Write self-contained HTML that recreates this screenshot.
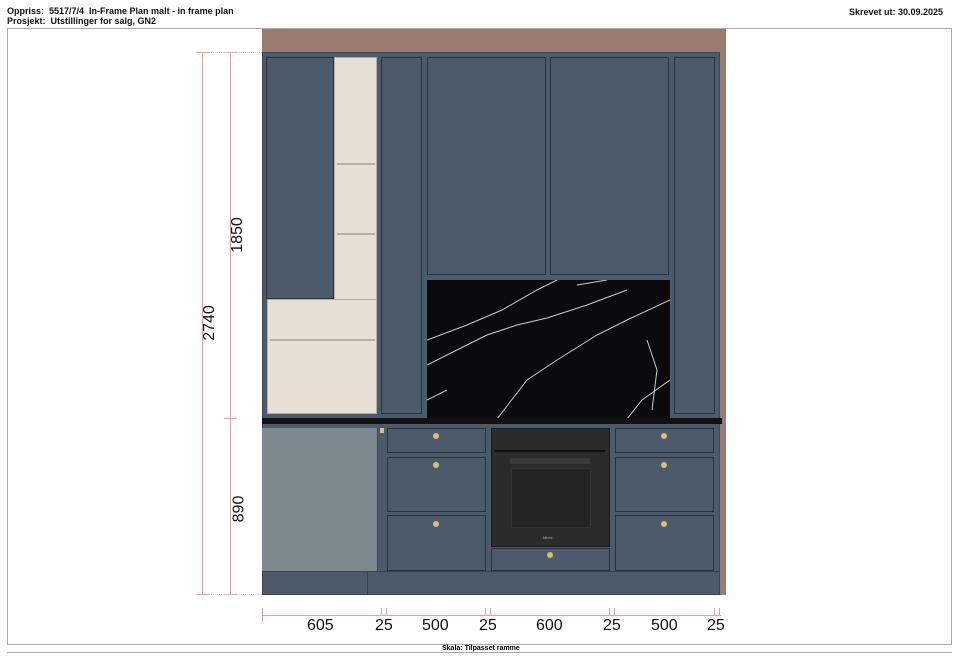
<!DOCTYPE html>
<html><head><meta charset="utf-8"><style>
*{margin:0;padding:0;box-sizing:border-box}
body{width:960px;height:659px;background:#fff;position:relative;overflow:hidden;font-family:"Liberation Sans",Arial,sans-serif}
.a{position:absolute}
.hd{font-size:9px;font-weight:bold;color:#111}
.door{position:absolute;background:#4b5b6b;border:1.5px solid #26323e}
.knob{position:absolute;width:6px;height:6px;border-radius:50%;background:#d8c070}
.wood{background:#e6dfd6}
.r{background:#f39a9a}
.dim{font-size:16px;color:#111;position:absolute}
</style></head><body>
<div class="a hd" style="left:7px;top:6px">Oppriss:&nbsp; 5517/7/4&nbsp; In-Frame Plan malt - in frame plan</div>
<div class="a hd" style="left:7px;top:16px">Prosjekt:&nbsp; Utstillinger for salg, GN2</div>
<div class="a hd" style="left:849px;top:7px">Skrevet ut: 30.09.2025</div>
<div class="a" style="left:7px;top:28px;width:945px;height:617px;border:1px solid #aaa"></div>
<div class="a" style="left:7px;top:652px;width:945px;height:1px;background:#aaa"></div>
<div class="a" style="left:442px;top:645px;font-size:7px;font-weight:bold">Skala: Tilpasset ramme</div>

<div class="a" style="left:262px;top:29px;width:464px;height:566px;background:#9a7b6f"></div>
<div class="a" style="left:262px;top:52px;width:458px;height:543px;background:#4b5b6b;border:1px solid #3a4756"></div>

<div class="a wood" style="left:334px;top:57px;width:43px;height:357px;border:1.5px solid #b8ada0"></div>
<div class="a wood" style="left:267px;top:299px;width:110px;height:115px;border:1.5px solid #b8ada0"></div>
<div class="a" style="left:337px;top:163px;width:38px;height:2px;background:#b8ada0"></div>
<div class="a" style="left:337px;top:233px;width:38px;height:2px;background:#b8ada0"></div>
<div class="a" style="left:270px;top:339px;width:105px;height:2px;background:#b8ada0"></div>
<div class="door" style="left:266px;top:57px;width:68px;height:242px"></div>

<div class="door" style="left:381px;top:57px;width:41px;height:357px"></div>
<div class="door" style="left:427px;top:57px;width:119px;height:218px"></div>
<div class="door" style="left:550px;top:57px;width:119px;height:218px"></div>
<div class="door" style="left:674px;top:57px;width:41px;height:357px"></div>

<svg class="a" style="left:427px;top:280px" width="243" height="139">
<rect width="243" height="139" fill="#0b0b0d"/>
<g stroke="#ccc" fill="none" stroke-width="1">
<path d="M0 60 L40 45 L75 30 L110 10 L130 0"/>
<path d="M0 85 L30 70 L60 55 L90 45 L120 38 L160 25 L200 10"/>
<path d="M70 139 L100 100 L130 80 L170 55 L200 40 L243 20"/>
<path d="M150 5 L180 0" />
<path d="M200 139 L215 120 L243 100"/>
<path d="M220 60 L230 90 L225 130"/>
<path d="M0 120 L20 110"/>
</g></svg>

<div class="a" style="left:262px;top:418px;width:460px;height:6px;background:#111"></div>

<div class="a" style="left:262px;top:428px;width:116px;height:143px;background:#7b8a8e;border-right:1.5px solid #3a4756"></div>
<div class="door" style="left:387px;top:428px;width:99px;height:25px"></div>
<div class="door" style="left:387px;top:457px;width:99px;height:55px"></div>
<div class="door" style="left:387px;top:515px;width:99px;height:56px"></div>
<div class="knob" style="left:433px;top:433px"></div>
<div class="knob" style="left:433px;top:462px"></div>
<div class="knob" style="left:433px;top:521px"></div>
<div class="a" style="left:491px;top:428px;width:119px;height:119px;background:#2b2b2c;border:1px solid #1a1a1a"></div>
<div class="a" style="left:495px;top:450px;width:110px;height:2px;background:#111"></div>
<div class="a" style="left:510px;top:458px;width:80px;height:6px;background:#3a3a3a"></div>
<div class="a" style="left:511px;top:468px;width:80px;height:60px;background:#242424;border:1px solid #333"></div>
<div class="a" style="left:543px;top:535px;font-size:4px;color:#aaa">Miele</div>
<div class="door" style="left:491px;top:548px;width:119px;height:23px"></div>
<div class="knob" style="left:547px;top:552px"></div>
<div class="door" style="left:615px;top:428px;width:99px;height:25px"></div>
<div class="door" style="left:615px;top:457px;width:99px;height:55px"></div>
<div class="door" style="left:615px;top:515px;width:99px;height:56px"></div>
<div class="knob" style="left:661px;top:433px"></div>
<div class="knob" style="left:661px;top:462px"></div>
<div class="knob" style="left:661px;top:521px"></div>
<div class="a" style="left:262px;top:571px;width:458px;height:1px;background:#34414e"></div>
<div class="a" style="left:367px;top:571px;width:1px;height:24px;background:#34414e"></div>
<div class="a" style="left:380px;top:428px;width:4px;height:5px;background:#d8c070"></div>

<div class="a r" style="left:202px;top:52px;width:1px;height:543px"></div>
<div class="a r" style="left:230px;top:52px;width:1px;height:543px"></div>
<div class="a r" style="left:196px;top:52px;width:13px;height:1px"></div>
<div class="a r" style="left:224px;top:52px;width:13px;height:1px"></div>
<div class="a r" style="left:224px;top:418px;width:13px;height:1px"></div>
<div class="a r" style="left:196px;top:594px;width:13px;height:1px"></div>
<div class="a r" style="left:224px;top:594px;width:13px;height:1px"></div>
<div class="a" style="left:209px;top:52px;width:53px;border-top:1px dotted #ccc"></div>
<div class="a" style="left:209px;top:594px;width:53px;border-top:1px dotted #ccc"></div>
<div class="dim" style="left:192px;top:314px;transform:rotate(-90deg)">2740</div>
<div class="dim" style="left:220px;top:226px;transform:rotate(-90deg)">1850</div>
<div class="dim" style="left:226px;top:500px;transform:rotate(-90deg)">890</div>

<div class="a r" style="left:262px;top:615px;width:459px;height:1px"></div>
<div class="a r" style="left:262px;top:608px;width:1px;height:14px"></div>
<div class="a r" style="left:381px;top:608px;width:1px;height:8px"></div>
<div class="a r" style="left:386px;top:608px;width:1px;height:8px"></div>
<div class="a r" style="left:485px;top:608px;width:1px;height:8px"></div>
<div class="a r" style="left:490px;top:608px;width:1px;height:8px"></div>
<div class="a r" style="left:609px;top:608px;width:1px;height:8px"></div>
<div class="a r" style="left:614px;top:608px;width:1px;height:8px"></div>
<div class="a r" style="left:714px;top:608px;width:1px;height:8px"></div>
<div class="a r" style="left:719px;top:608px;width:1px;height:8px"></div>
<div class="dim" style="left:307px;top:617px">605</div>
<div class="dim" style="left:375px;top:617px">25</div>
<div class="dim" style="left:422px;top:617px">500</div>
<div class="dim" style="left:479px;top:617px">25</div>
<div class="dim" style="left:536px;top:617px">600</div>
<div class="dim" style="left:603px;top:617px">25</div>
<div class="dim" style="left:651px;top:617px">500</div>
<div class="dim" style="left:707px;top:617px">25</div>
</body></html>
